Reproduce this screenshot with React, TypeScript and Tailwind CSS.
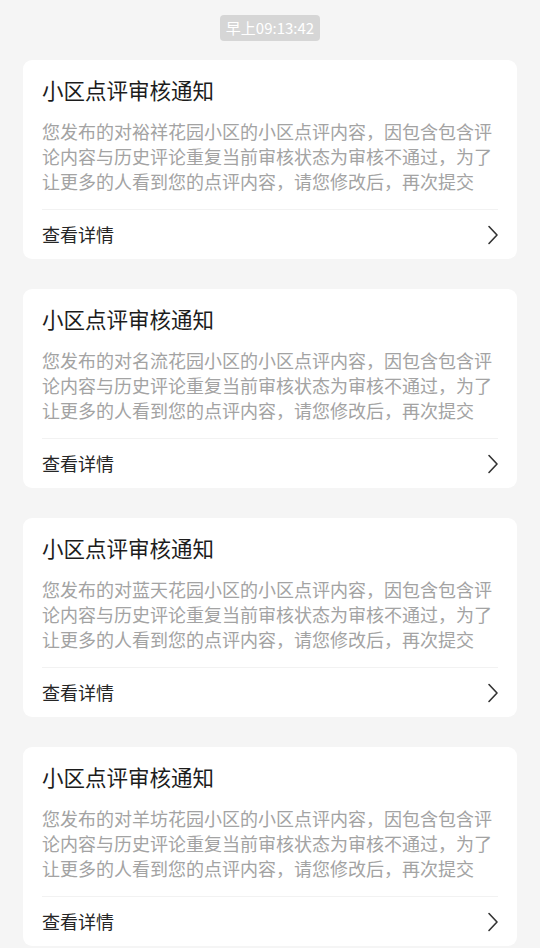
import React from 'react';

interface Notice {
    id: number;
    community: string;
}

const notices: Notice[] = [
    { id: 1, community: '裕祥花园' },
    { id: 2, community: '名流花园' },
    { id: 3, community: '蓝天花园' },
    { id: 4, community: '羊坊花园' },
];

const ChevronRight: React.FC = () => (
    <svg width="12" height="20" viewBox="0 0 12 20" fill="none">
        <path d="M2 1.5 L10 10 L2 18.5" stroke="#333333" strokeWidth="1.6" strokeLinecap="round" strokeLinejoin="round" />
    </svg>
);

const NoticeCard: React.FC<{ notice: Notice }> = ({ notice }) => {
    // Lines are fixed to match how the device wraps the text
    const lines = [
        `您发布的对${notice.community}小区的小区点评内容，因包含包含评`,
        '论内容与历史评论重复当前审核状态为审核不通过，为了',
        '让更多的人看到您的点评内容，请您修改后，再次提交',
    ];

    return (
        <div className="mx-[23px] bg-white rounded-[9px] px-[19px] pt-[18px]">
            <h2 className="text-[21.5px] leading-[24px] text-[#1c1c1c] font-normal">小区点评审核通知</h2>
            <div className="mt-[17px] text-[18px] leading-[25px] text-[#a3a3a3]">
                {lines.map((l, i) => (
                    <div key={i} className="whitespace-nowrap">{l}</div>
                ))}
            </div>
            <div className="mt-[15px] h-px bg-[#f2f2f2]" />
            <div className="h-[49px] flex items-center justify-between">
                <span className="text-[18px] text-[#262626]">查看详情</span>
                <span className="mr-[-1px] flex items-center">
                    <ChevronRight />
                </span>
            </div>
        </div>
    );
};

export default function App() {
    return (
        <div className="min-h-[948px] bg-[#f5f5f5] font-['Noto_Sans_CJK_SC','Noto_Sans',sans-serif] pt-[15px] pb-[30px]">
            <div className="flex justify-center">
                <div className="w-[100px] h-[26px] rounded-[4px] bg-[#d6d6d6] text-white text-[15px] flex items-center justify-center">
                    早上09:13:42
                </div>
            </div>
            <div className="mt-[19px] flex flex-col gap-[30px]">
                {notices.map(n => (
                    <NoticeCard key={n.id} notice={n} />
                ))}
            </div>
        </div>
    );
}
